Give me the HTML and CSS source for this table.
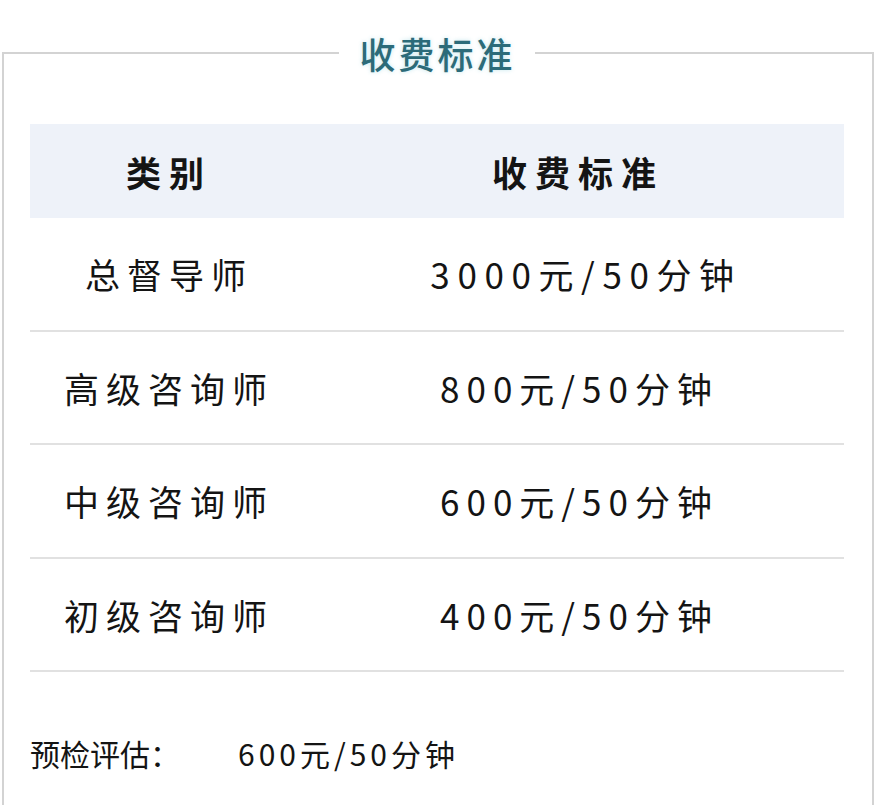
FILE: index.html
```html
<!DOCTYPE html>
<html lang="zh">
<head>
<meta charset="utf-8">
<title>收费标准</title>
<link rel="stylesheet" href="styles.css">
</head>
<body>
<fieldset class="card">
  <legend class="card-title">收费标准</legend>
  <table class="fees">
    <thead>
      <tr><th class="col-type">类别</th><th class="col-fee">收费标准</th></tr>
    </thead>
    <tbody>
      <tr><td class="type">总督导师</td><td class="wide">3000元/50分钟</td></tr>
      <tr><td class="type">高级咨询师</td><td>800元/50分钟</td></tr>
      <tr><td class="type">中级咨询师</td><td>600元/50分钟</td></tr>
      <tr><td class="type">初级咨询师</td><td>400元/50分钟</td></tr>
    </tbody>
  </table>
  <p class="note"><span class="note-label">预检评估：</span><span class="note-value">600元/50分钟</span></p>
</fieldset>
</body>
</html>
```

FILE: styles.css
```css
html, body {
  margin: 0;
  padding: 0;
  background: #ffffff;
}

body {
  font-family: "Noto Sans CJK SC", "Noto Sans", sans-serif;
  color: #141414;
}

.card {
  margin: 33px 10px 0 2px;
  padding: 51px 28px 60px 26px;
  border: 2px solid #d3d3d3;
  border-bottom: none;
  min-width: 0;
}

.card-title {
  margin: 0 auto;
  padding: 0 19px 0 20px;
  font-size: 36px;
  line-height: 40px;
  font-weight: 500;
  letter-spacing: 3px;
  color: #2c6b79;
  text-shadow: 0 0 4px rgba(120, 200, 215, 0.45);
}

.fees {
  width: 100%;
  border-collapse: collapse;
  table-layout: fixed;
}

.fees th {
  height: 94px;
  padding: 0 0 0 4px;
  background: #eef2f9;
  font-size: 35px;
  font-weight: 700;
  letter-spacing: 8px;
  text-align: center;
}

.fees th.col-type {
  width: 278px;
  padding-left: 0;
}

.fees td {
  height: 111.6px;
  padding: 0 0 0 7px;
  border-bottom: 2px solid #e1e1e1;
  font-size: 35px;
  font-weight: 400;
  letter-spacing: 7px;
  text-align: center;
}

.fees td.type {
  padding-left: 0;
}

.fees td.wide {
  padding-left: 20px;
  letter-spacing: 7.6px;
}

.note {
  margin: 61px 0 0 0;
  font-size: 30px;
  line-height: 40px;
  display: flex;
  align-items: baseline;
}

.note-label {
  width: 208px;
  flex: none;
}

.note-value {
  letter-spacing: 4px;
}
```
